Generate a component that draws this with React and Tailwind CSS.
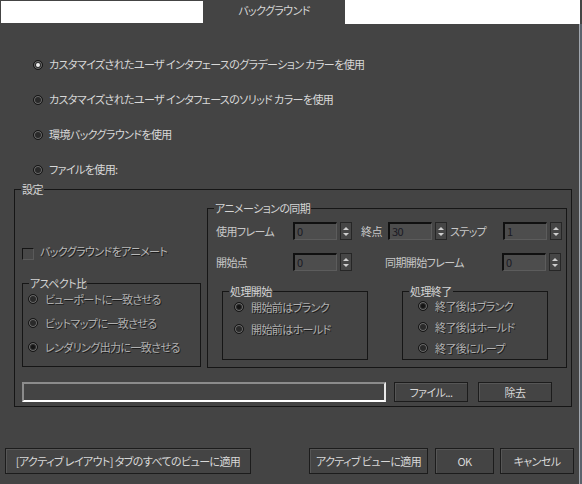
import React from "react";

const font = {
  fontFamily: '"Noto Sans CJK JP", "Noto Sans", sans-serif',
};

const Radio = ({ on, dim }) => (
  <span className="flex h-[10px] w-[10px] shrink-0 items-center justify-center rounded-full border border-[#161616] bg-[#2a2a2a] shadow-[inset_0_0_0_1px_#6e6e6e]">
    {on && (
      <span
        className={`h-[4px] w-[4px] rounded-full ${dim ? "bg-[#151515]" : "bg-[#f0f0f0]"}`}
      />
    )}
  </span>
);

const Spinner = ({ value }) => (
  <div className="flex h-[18px] items-stretch gap-[3px]">
    <div className="flex w-[44px] items-center border-t-2 border-l-2 border-r border-b border-t-[#101010] border-l-[#101010] border-r-[#5c5c5c] border-b-[#5c5c5c] bg-[#4d4d4d] pl-[2px] text-[11px] leading-none text-[#1a1a24]">
      {value}
    </div>
    <div className="flex w-[12px] flex-col items-center justify-center gap-[3px] border border-[#262626] bg-[#464646]">
      <span className="h-0 w-0 border-x-[3px] border-b-[3px] border-x-transparent border-b-[#cfcfcf]" />
      <span className="h-0 w-0 border-x-[3px] border-t-[3px] border-x-transparent border-t-[#cfcfcf]" />
    </div>
  </div>
);

const Group = ({ label, className, children }) => (
  <div className={`flex flex-col border border-[#161616] ${className}`}>
    <div className="-mt-[8px] ml-[6px] w-fit bg-[#444444] px-[1px] leading-[14px] text-[#d4d4d4]">
      {label}
    </div>
    {children}
  </div>
);

const Btn = ({ children, className }) => (
  <div
    className={`flex items-center justify-center whitespace-nowrap border border-[#1c1c1c] bg-[#444444] leading-none text-[#d8d8d8] shadow-[inset_1px_1px_0_#565656] ${className}`}
  >
    {children}
  </div>
);

const RadioRow = ({ on, dim, children, gap = "gap-[7px]" }) => (
  <div className={`flex h-[14px] items-center whitespace-nowrap ${gap}`}>
    <Radio on={on} dim={dim} />
    <span
      className={
        dim
          ? "text-[#b0b0b0] [text-shadow:1px_1px_0_#1c1c1c]"
          : "text-[#d8d8d8]"
      }
    >
      {children}
    </span>
  </div>
);

export default function App() {
  return (
    <div
      style={font}
      className="flex h-[484px] w-[582px] flex-col overflow-hidden bg-[#444444] text-[11px] leading-none tracking-[-0.6px] text-[#d8d8d8] [font-feature-settings:'palt']"
    >
      {/* tab strip */}
      <div className="flex h-[24px] shrink-0">
        <div className="ml-[1px] mt-[1px] h-[22px] w-[202px] bg-white" />
        <div className="flex w-[142px] items-center justify-center pb-[4px] text-[#d6d6d6]">
          バックグラウンド
        </div>
        <div className="h-[24px] w-[235px] bg-white" />
      </div>

      <div className="flex flex-1">
        <div className="flex w-[579px] flex-col">
          {/* source options */}
          <div className="flex flex-col pl-[33px] pt-[23px]">
            {[
              ["カスタマイズされたユーザ インタフェースのグラデーション カラーを使用", true],
              ["カスタマイズされたユーザ インタフェースのソリッド カラーを使用", false],
              ["環境バックグラウンドを使用", false],
              ["ファイルを使用:", false],
            ].map(([t, on]) => (
              <div key={t} className="flex h-[35px] items-center gap-[6px]">
                <Radio on={on} />
                <span>{t}</span>
              </div>
            ))}
          </div>

          {/* settings */}
          <Group label="設定" className="ml-[14px] mt-[2px] h-[218px] w-[558px]">
            <div className="mt-[12px] flex pl-[7px]">
              <div className="flex w-[179px] flex-col pt-[40px]">
                <div className="flex h-[12px] items-center gap-[6px]">
                  <span className="h-[12px] w-[12px] border border-t-[#141414] border-l-[#141414] border-r-[#5a5a5a] border-b-[#5a5a5a] bg-[#484848]" />
                  <span className="-mt-[6px] text-[#b8b8b8] [text-shadow:1px_1px_0_#1c1c1c]">
                    バックグラウンドをアニメート
                  </span>
                </div>
                <Group label="アスペクト比" className="mt-[23px] h-[84px] w-[179px]">
                  <div className="mt-[2px] flex flex-col gap-[10px] pl-[5px]">
                    <RadioRow dim>ビューポートに一致させる</RadioRow>
                    <RadioRow dim>ビットマップに一致させる</RadioRow>
                    <RadioRow on dim>レンダリング出力に一致させる</RadioRow>
                  </div>
                </Group>
              </div>

              <Group label="アニメーションの同期" className="ml-[6px] h-[160px] w-[360px]">
                <div className="mt-[7px] flex items-center pl-[8px] text-[#c8c8c8]">
                  <span className="w-[77px]">使用フレーム</span>
                  <Spinner value="0" />
                  <span className="ml-[9px] w-[27px]">終点</span>
                  <Spinner value="30" />
                  <span className="ml-[3px] w-[53px]">ステップ</span>
                  <Spinner value="1" />
                </div>
                <div className="mt-[13px] flex items-center pl-[8px] text-[#c8c8c8]">
                  <span className="w-[77px]">開始点</span>
                  <Spinner value="0" />
                  <span className="ml-[33px] w-[117px]">同期開始フレーム</span>
                  <Spinner value="0" />
                </div>
                <div className="mt-[20px] flex gap-[34px] pl-[14px]">
                  <Group label="処理開始" className="h-[69px] w-[146px]">
                    <div className="mt-[2px] flex flex-col gap-[8px] pl-[11px]">
                      <RadioRow on dim>開始前はブランク</RadioRow>
                      <RadioRow dim>開始前はホールド</RadioRow>
                    </div>
                  </Group>
                  <Group label="処理終了" className="h-[69px] w-[146px]">
                    <div className="mt-[1px] flex flex-col gap-[7px] pl-[15px]">
                      <RadioRow on dim>終了後はブランク</RadioRow>
                      <RadioRow dim>終了後はホールド</RadioRow>
                      <RadioRow dim>終了後にループ</RadioRow>
                    </div>
                  </Group>
                </div>
              </Group>
            </div>

            <div className="mt-[14px] flex h-[20px] pl-[7px]">
              <div className="w-[364px] border-2 border-t-[#8c8c8c] border-l-[#8c8c8c] border-b-white border-r-[#e8e8e8] bg-[#444444]" />
              <Btn className="ml-[8px] w-[74px]">ファイル...</Btn>
              <Btn className="ml-[10px] w-[74px]">除去</Btn>
            </div>
          </Group>

          {/* bottom buttons */}
          <div className="mt-[41px] flex h-[26px] pl-[5px]">
            <Btn className="w-[246px]">[アクティブ レイアウト] タブのすべてのビューに適用</Btn>
            <Btn className="ml-[58px] w-[119px]">アクティブ ビューに適用</Btn>
            <Btn className="ml-[7px] w-[59px]">OK</Btn>
            <Btn className="ml-[6px] w-[74px]">キャンセル</Btn>
          </div>
        </div>
        <div className="w-[3px] border-l border-[#a0a6ae] bg-[#5a626c]" />
      </div>
    </div>
  );
}
